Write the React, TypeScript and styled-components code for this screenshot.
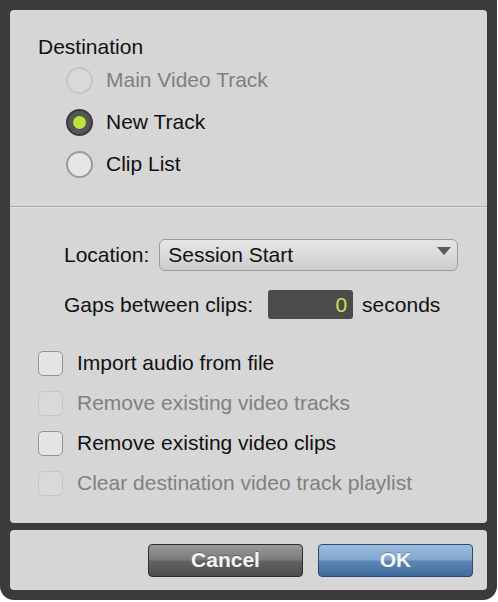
import React from "react";
import styled, { createGlobalStyle } from "styled-components";

const GlobalStyle = createGlobalStyle`
    html, body {
        margin: 0;
        padding: 0;
        background: #ffffff;
    }
    body {
        font-family: "Liberation Sans", Arial, sans-serif;
    }
`;

const Frame = styled.div`
    width: 497px;
    height: 600px;
    box-sizing: border-box;
    background: #3b3b3b;
    border-radius: 0 0 14px 14px;
    padding: 10px 10px 10px 10px;
    display: flex;
    flex-direction: column;
    gap: 7px;
`;

const Panel = styled.div`
    background: #d6d6d6;
    border-radius: 4px;
    box-sizing: border-box;
`;

const MainPanel = styled(Panel)`
    height: 513px;
    display: flex;
    flex-direction: column;
`;

const ButtonPanel = styled(Panel)`
    height: 60px;
    display: flex;
    align-items: center;
    justify-content: flex-end;
    gap: 15px;
    padding-right: 14px;
`;

const Section = styled.div`
    padding: 25px 0 21px 28px;
`;

const Label = styled.div<{ $disabled?: boolean }>`
    font-size: 21px;
    line-height: 24px;
    color: ${(p) => (p.$disabled ? "#808080" : "#111111")};
    white-space: nowrap;
`;

const RadioList = styled.div`
    padding-left: 28px;
    display: flex;
    flex-direction: column;
`;

const OptionRow = styled.div`
    height: 42px;
    display: flex;
    align-items: center;
    gap: 13px;
`;

const Radio = styled.span<{ $checked?: boolean; $disabled?: boolean }>`
    width: 27px;
    height: 27px;
    box-sizing: border-box;
    border-radius: 50%;
    flex: none;
    display: flex;
    align-items: center;
    justify-content: center;
    background: ${(p) =>
        p.$checked ? "#555555" : p.$disabled ? "#d9d9d9" : "#e6e6e6"};
    border: 2px solid
        ${(p) => (p.$checked ? "#3a3a3a" : p.$disabled ? "#c4c4c4" : "#9a9a9a")};
`;

const RadioDot = styled.span`
    width: 13px;
    height: 13px;
    border-radius: 50%;
    background: #bde33c;
`;

const Divider = styled.div`
    height: 1px;
    background: #a9a9a9;
    border-bottom: 1px solid #e2e2e2;
`;

const Form = styled.div`
    padding: 31px 0 0 54px;
    display: flex;
    flex-direction: column;
    gap: 19px;
`;

const FieldRow = styled.div<{ $gap: number }>`
    display: flex;
    align-items: center;
    gap: ${(p) => p.$gap}px;
`;

const Select = styled.div`
    width: 299px;
    height: 32px;
    box-sizing: border-box;
    border: 1px solid #9c9c9c;
    border-radius: 6px;
    background: linear-gradient(#e6e6e6, #cdcdcd);
    display: flex;
    align-items: center;
    padding: 0 6px 0 8px;
    position: relative;
    font-size: 21px;
    color: #111;
`;

const Arrow = styled.span`
    position: absolute;
    right: 6px;
    top: 7px;
    width: 0;
    height: 0;
    border-left: 7px solid transparent;
    border-right: 7px solid transparent;
    border-top: 8px solid #5a5a5a;
`;

const NumberBox = styled.div`
    width: 85px;
    height: 29px;
    box-sizing: border-box;
    background: #4b4b4b;
    border-radius: 3px;
    display: flex;
    align-items: center;
    justify-content: flex-end;
    padding-right: 6px;
    margin-right: -6px;
    font-size: 21px;
    color: #c4e35a;
`;

const Checks = styled.div`
    padding: 24px 0 0 28px;
    display: flex;
    flex-direction: column;
`;

const CheckRow = styled.div`
    height: 40px;
    display: flex;
    align-items: center;
    gap: 14px;
`;

const Checkbox = styled.span<{ $disabled?: boolean }>`
    width: 25px;
    height: 25px;
    box-sizing: border-box;
    flex: none;
    border-radius: 5px;
    background: ${(p) => (p.$disabled ? "#d9d9d9" : "#e4e4e4")};
    border: 1.5px solid ${(p) => (p.$disabled ? "#c6c6c6" : "#949494")};
`;

const Button = styled.button<{ $primary?: boolean }>`
    width: 155px;
    height: 33px;
    border-radius: 4px;
    font-family: "Liberation Sans", Arial, sans-serif;
    font-weight: 700;
    font-size: 21px;
    color: #f4f4f4;
    cursor: pointer;
    border: 1.5px solid ${(p) => (p.$primary ? "#2a4a70" : "#2e2e2e")};
    background: ${(p) =>
        p.$primary
            ? "linear-gradient(#9cbddf 0%, #7fa6cf 48%, #5d88b6 52%, #3f6b9a 100%)"
            : "linear-gradient(#9a9a9a 0%, #7a7a7a 48%, #626262 52%, #4c4c4c 100%)"};
    text-shadow: 0 -1px 0 rgba(0, 0, 0, 0.25);
`;

const destinations = [
    { label: "Main Video Track", disabled: true },
    { label: "New Track", checked: true },
    { label: "Clip List" },
];

const options = [
    { label: "Import audio from file" },
    { label: "Remove existing video tracks", disabled: true },
    { label: "Remove existing video clips" },
    { label: "Clear destination video track playlist", disabled: true },
];

const App = () => {
    return (
        <>
            <GlobalStyle />
            <Frame>
                <MainPanel>
                    <Section>
                        <Label>Destination</Label>
                        <RadioList>
                            {destinations.map((d) => (
                                <OptionRow key={d.label}>
                                    <Radio $checked={d.checked} $disabled={d.disabled}>
                                        {d.checked && <RadioDot />}
                                    </Radio>
                                    <Label $disabled={d.disabled}>{d.label}</Label>
                                </OptionRow>
                            ))}
                        </RadioList>
                    </Section>
                    <Divider />
                    <Form>
                        <FieldRow $gap={10}>
                            <Label>Location:</Label>
                            <Select>
                                Session Start
                                <Arrow />
                            </Select>
                        </FieldRow>
                        <FieldRow $gap={15}>
                            <Label>Gaps between clips:</Label>
                            <NumberBox>0</NumberBox>
                            <Label>seconds</Label>
                        </FieldRow>
                    </Form>
                    <Checks>
                        {options.map((o) => (
                            <CheckRow key={o.label}>
                                <Checkbox $disabled={o.disabled} />
                                <Label $disabled={o.disabled}>{o.label}</Label>
                            </CheckRow>
                        ))}
                    </Checks>
                </MainPanel>
                <ButtonPanel>
                    <Button>Cancel</Button>
                    <Button $primary>OK</Button>
                </ButtonPanel>
            </Frame>
        </>
    );
};

export default App;
